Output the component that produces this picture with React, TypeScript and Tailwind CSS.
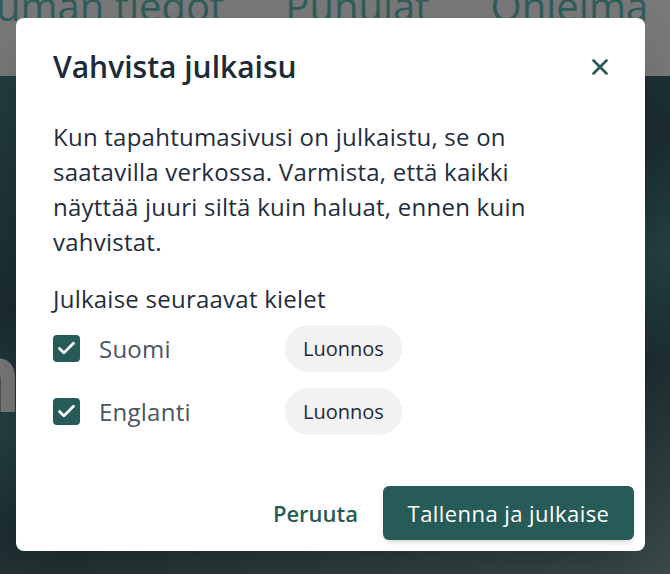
import { Check, X } from "lucide-react";

const languages = ["Suomi", "Englanti"];

function LanguageRow({ label }: { label: string }) {
  return (
    <div className="flex h-[47px] items-center">
      <span className="flex h-[27px] w-[27px] items-center justify-center rounded-[4px] bg-[#275b58]">
        <Check className="h-[21px] w-[21px] text-white" strokeWidth={3.2} />
      </span>
      <span className="ml-[19px] w-[186px] text-[24px] tracking-[0.01em] text-[#4a5563]">{label}</span>
      <span className="flex h-[47px] items-center rounded-full bg-[#f2f2f2] px-[18px] text-[20px] text-[#1f2a37]">
        Luonnos
      </span>
    </div>
  );
}

export default function App() {
  return (
    <div className="relative h-[574px] w-[670px] overflow-hidden font-['Open_Sans',sans-serif]">
      <header className="flex h-[76px] items-start overflow-hidden bg-[#787878] text-[40px] leading-none text-[#2f5d5a]">
        <span className="-mt-[14px] -ml-[4px] whitespace-nowrap">uman tiedot</span>
        <span className="-mt-[14px] ml-[61px] whitespace-nowrap">Puhujat</span>
        <span className="-mt-[14px] ml-[61px] whitespace-nowrap">Ohjelma</span>
      </header>
      <main className="h-[498px] bg-[linear-gradient(165deg,#233d40_0%,#1b2c2f_35%,#24403f_52%,#1d2e30_68%,#3a4a4a_100%)] pt-[251px]">
        <div className="-ml-[41px] text-[96px] font-bold leading-none text-[#777777]">n</div>
      </main>

      <div className="absolute left-4 top-[18px] flex h-[533px] w-[629px] flex-col rounded-lg bg-white shadow-2xl">
        <div className="flex items-center justify-between pl-[37px] pr-[32px] pt-[29px]">
          <h2 className="text-[30px] font-semibold leading-[40px] text-[#1c2b39]">Vahvista julkaisu</h2>
          <button className="text-[#275b58]">
            <X className="h-[26px] w-[26px]" strokeWidth={2.5} />
          </button>
        </div>
        <p className="mt-[32px] pl-[37px] pr-[60px] text-[24px] leading-[35px] tracking-[0.01em] text-[#1f2d3d]">
          Kun tapahtumasivusi on julkaistu, se on saatavilla verkossa. Varmista, että kaikki näyttää juuri siltä kuin
          haluat, ennen kuin vahvistat.
        </p>
        <div className="mt-[24px] px-[37px]">
          <div className="text-[24px] leading-[32px] tracking-[0.01em] text-[#1f2d3d]">Julkaise seuraavat kielet</div>
          <div className="mt-[10px] flex flex-col gap-[16px]">
            {languages.map((l) => (
              <LanguageRow key={l} label={l} />
            ))}
          </div>
        </div>
        <div className="mt-auto flex items-center justify-end gap-[25px] pb-[11px] pr-[11px]">
          <button className="text-[22px] font-semibold text-[#275b58]">Peruuta</button>
          <button className="h-[54px] w-[251px] rounded-md bg-[#275b58] text-[22px] font-medium tracking-[0.02em] text-white shadow-md">
            Tallenna ja julkaise
          </button>
        </div>
      </div>
    </div>
  );
}
